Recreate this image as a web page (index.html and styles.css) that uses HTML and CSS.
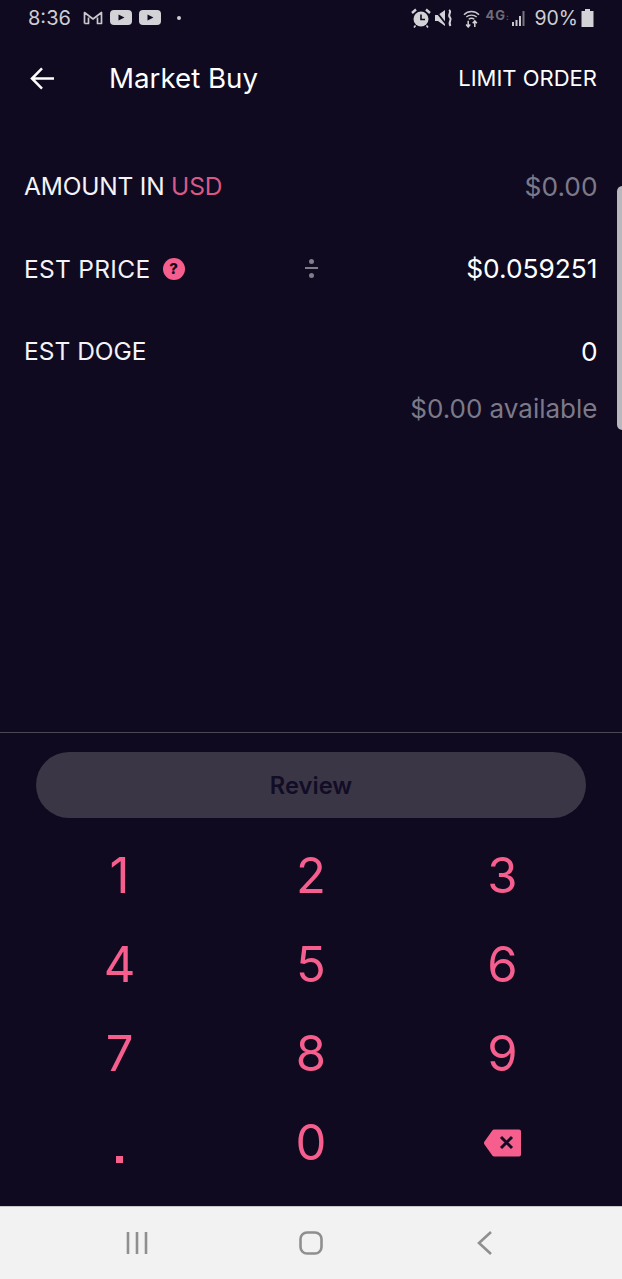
FILE: index.html
```html
<!DOCTYPE html>
<html lang="en">
    <head>
        <meta charset="UTF-8" />
        <meta name="viewport" content="width=device-width, initial-scale=1.0" />
        <title>Market Buy</title>
        <link rel="stylesheet" href="styles.css">
    </head>
    <body>
        <div class="pantalla">
            <!-- status bar -->
            <div class="estado">
                <div class="estado-izq">
                    <span class="hora">8:36</span>
                    <svg class="ic-gmail" viewBox="0 0 20 14"><path d="M1.500 12.500V1.500L10 8L18.500 1.500V12.500H14.500V6.500M1.500 12.500H5.500V6.500" fill="none" stroke="#c9c8cc" stroke-width="1.700" stroke-linejoin="round"/></svg>
                    <svg class="ic-video" viewBox="0 0 22 15"><rect width="22" height="15" rx="4" fill="#d3d2d6"/><path d="M8.500 4.500L14.500 7.500L8.500 10.500Z" fill="#0f0a1f"/></svg>
                    <svg class="ic-video" viewBox="0 0 22 15"><rect width="22" height="15" rx="4" fill="#d3d2d6"/><path d="M8.500 4.500L14.500 7.500L8.500 10.500Z" fill="#0f0a1f"/></svg>
                    <span class="punto"></span>
                </div>
                <div class="estado-der">
                    <svg class="ic-alarma" viewBox="0 0 20 20"><circle cx="10" cy="11" r="7.500" fill="#d3d2d6"/><path d="M10 6.500V11.500H14" fill="none" stroke="#0f0a1f" stroke-width="1.600"/><path d="M1 5L5 1.500M19 5L15 1.500" stroke="#d3d2d6" stroke-width="2.400"/><path d="M4.500 17.500L3 19.500M15.500 17.500L17 19.500" stroke="#d3d2d6" stroke-width="1.600"/></svg>
                    <svg class="ic-mudo" viewBox="0 0 18 18"><path d="M0 6H3L10 1V17L3 12H0Z" fill="#d3d2d6"/><path d="M0 1L11 15" stroke="#0f0a1f" stroke-width="1.800"/><path d="M14 1C17.500 3 12 5.500 15 8.500C17.500 11 12.500 13 15.500 17" fill="none" stroke="#d3d2d6" stroke-width="2"/></svg>
                    <svg class="ic-wifi" viewBox="0 0 18 20"><path d="M1 6.500C5.500 2 12.500 2 17 6.500M3.500 9C6.500 6.300 11.500 6.300 14.500 9M6 11.300C7.800 10 10.200 10 12 11.300" fill="none" stroke="#c9c8cc" stroke-width="1.500"/><path d="M5.500 13V19.500M3.300 17L5.500 19.500L7.700 17M12.500 19.500V13M10.300 15.500L12.500 13L14.700 15.500" fill="none" stroke="#d3d2d6" stroke-width="1.600"/></svg>
                    <span class="red">4G<span class="red-fin">:</span></span>
                    <svg class="ic-senal" viewBox="0 0 16 18"><path d="M1 13h2v4H1zM4.500 11h2v6h-2zM8 7h2v10H8z" fill="#c9c8cc"/><path d="M11.500 2h2v15h-2z" fill="#77757f"/></svg>
                    <span class="bateria-txt">90%</span>
                    <svg class="ic-bateria" viewBox="0 0 13 18"><path d="M4 0H9V2H12.500V18H.5V2H4Z" fill="#d3d2d6"/></svg>
                </div>
            </div>

            <!-- header -->
            <div class="cabecera">
                <svg class="ic-atras" viewBox="0 0 26 24"><path d="M25 12H2M12.500 1.500L2 12L12.500 22.500" fill="none" stroke="#fff" stroke-width="2.600"/></svg>
                <h1>Market Buy</h1>
                <a class="limite">LIMIT ORDER</a>
            </div>

            <!-- order form -->
            <div class="orden">
                <div class="fila">
                    <span class="etiqueta estrecha">AMOUNT IN <span class="rosa">USD</span></span>
                    <span class="valor apagado">$0.00</span>
                </div>
                <div class="fila">
                    <span class="etiqueta amplia">EST PRICE <span class="ayuda">?</span></span>
                    <span class="dividir"><i></i><b></b><i></i></span>
                    <span class="valor">$0.059251</span>
                </div>
                <div class="fila">
                    <span class="etiqueta">EST DOGE</span>
                    <span class="valor">0</span>
                </div>
                <p class="disponible">$0.00 available</p>
            </div>
            <div class="barra-scroll"></div>

            <!-- keypad -->
            <div class="inferior">
                <button class="revisar">Review</button>
                <div class="teclado">
                    <span class="tecla">1</span>
                    <span class="tecla">2</span>
                    <span class="tecla">3</span>
                    <span class="tecla">4</span>
                    <span class="tecla">5</span>
                    <span class="tecla">6</span>
                    <span class="tecla">7</span>
                    <span class="tecla">8</span>
                    <span class="tecla">9</span>
                    <span class="tecla"><span class="decimal"></span></span>
                    <span class="tecla">0</span>
                    <span class="tecla">
                        <svg class="ic-borrar" viewBox="0 0 37 28"><path d="M10 .5H35A2 2 0 0 1 37 2.500V25.500A2 2 0 0 1 35 27.500H10A2 2 0 0 1 8.500 26.800L.5 15.500A2.500 2.500 0 0 1 .5 12.500L8.500 1.200A2 2 0 0 1 10 .5Z" fill="#f65e8e"/><path d="M17 8L28 19M28 8L17 19" stroke="#0f0a1f" stroke-width="3"/></svg>
                    </span>
                </div>
            </div>

            <!-- android nav -->
            <div class="navegacion">
                <svg class="ic-nav" viewBox="0 0 24 24"><path d="M3 1V23M12 1V23M21 1V23" fill="none" stroke="#8f8f8f" stroke-width="2.600"/></svg>
                <svg class="ic-nav" viewBox="0 0 24 24"><rect x="1.500" y="1.500" width="21" height="21" rx="6.500" fill="none" stroke="#8f8f8f" stroke-width="2.600"/></svg>
                <svg class="ic-nav" viewBox="0 0 24 24"><path d="M18 1L6 12L18 23" fill="none" stroke="#8f8f8f" stroke-width="2.600"/></svg>
            </div>
        </div>
    </body>
</html>
```

FILE: styles.css
```css
* {
    box-sizing: border-box;
    margin: 0;
    padding: 0;
}

body {
    font-family: Inter, "Noto Sans", sans-serif;
    background: #0f0a1f;
    color: #f4f3f7;
}

.pantalla {
    position: relative;
    display: flex;
    flex-direction: column;
    width: 622px;
    height: 1279px;
    overflow: hidden;
}

/* status bar */
.estado {
    display: flex;
    justify-content: space-between;
    align-items: center;
    height: 35px;
    padding: 0 28px;
    color: #cfced3;
}

.estado-izq,
.estado-der {
    display: flex;
    align-items: center;
}

.hora {
    font-size: 20px;
    margin-right: 12px;
}

.ic-gmail {
    width: 20px;
    height: 14px;
    margin-right: 7px;
}

.ic-video {
    width: 22px;
    height: 15px;
    margin-right: 7px;
}

.punto {
    width: 4px;
    height: 4px;
    margin-left: 9px;
    border-radius: 50%;
    background: #cfced3;
}

.ic-alarma {
    width: 20px;
    height: 20px;
    margin-right: 4px;
}

.ic-mudo {
    width: 18px;
    height: 18px;
    margin-right: 10px;
}

.ic-wifi {
    width: 17px;
    height: 20px;
    margin-right: 5px;
}

.red {
    align-self: flex-start;
    width: 23px;
    margin: 1px 3px 0 0;
    font-size: 13px;
    font-weight: 700;
    letter-spacing: 1px;
    color: #6f6d78;
}

.red-fin {
    font-size: 8px;
}

.ic-senal {
    width: 16px;
    height: 18px;
    margin-right: 7px;
}

.bateria-txt {
    font-size: 19.500px;
    margin-right: 3px;
}

.ic-bateria {
    width: 13px;
    height: 18px;
}

/* header */
.cabecera {
    display: flex;
    align-items: center;
    height: 87px;
    padding: 0 25px 0 30px;
}

.ic-atras {
    width: 25px;
    height: 23px;
    margin-right: 54px;
}

.cabecera h1 {
    flex: 1;
    margin-top: -2px;
    font-size: 27.700px;
    font-weight: 400;
    color: #fff;
}

.limite {
    margin-top: -2px;
    font-size: 22px;
    font-weight: 400;
    color: #fff;
}

/* order form */
.orden {
    flex: 1;
    padding: 23px 24.500px 0 24px;
}

.fila {
    position: relative;
    display: flex;
    justify-content: space-between;
    align-items: center;
    height: 82.500px;
}

.etiqueta {
    display: flex;
    align-items: center;
    gap: 5px;
    font-size: 24.500px;
    white-space: pre;
}

.estrecha {
    letter-spacing: -0.2px;
}

.amplia {
    letter-spacing: 0.3px;
}

.rosa {
    margin-left: -5px;
    color: #dc5884;
}

.ayuda {
    display: flex;
    justify-content: center;
    align-items: center;
    width: 22px;
    height: 22px;
    font-size: 15px;
    font-weight: 800;
    color: #0f0a1f;
    background: #f65e8e;
    border-radius: 50%;
}

.valor {
    font-size: 26.300px;
    font-weight: 400;
    color: #fff;
}

.apagado {
    color: #7c7989;
}

.dividir {
    position: absolute;
    left: 281px;
    top: 31px;
    display: flex;
    flex-direction: column;
    align-items: center;
    gap: 3.500px;
    width: 13px;
}

.dividir i {
    width: 5px;
    height: 5px;
    border-radius: 50%;
    background: #7f7c8c;
}

.dividir b {
    width: 13px;
    height: 2px;
    background: #7f7c8c;
}

.disponible {
    font-size: 26px;
    text-align: right;
    color: #7c7989;
}

.barra-scroll {
    position: absolute;
    top: 186px;
    right: -6px;
    width: 11px;
    height: 244px;
    background: #b9b8bd;
    border-radius: 6px;
}

/* keypad */
.inferior {
    height: 474px;
    padding-top: 19px;
    border-top: 1px solid #4a4654;
}

.revisar {
    display: block;
    width: 550px;
    height: 66px;
    margin: 0 auto;
    font-family: inherit;
    font-size: 23.700px;
    font-weight: 600;
    color: #120d27;
    background: #3b3646;
    border: none;
    border-radius: 33px;
}

.teclado {
    display: grid;
    grid-template-columns: repeat(3, 191.500px);
    grid-auto-rows: 89px;
    justify-content: center;
    margin-top: 13px;
}

.tecla {
    display: flex;
    justify-content: center;
    align-items: center;
    font-size: 49px;
    font-weight: 400;
    color: #f65e8e;
}

.decimal {
    width: 7px;
    height: 7px;
    margin-top: 33px;
    background: #f65e8e;
}

.ic-borrar {
    width: 37px;
    height: 28px;
}

/* android nav */
.navegacion {
    display: flex;
    justify-content: center;
    gap: 150px;
    align-items: center;
    height: 73px;
    background: #f2f2f2;
    border-top: 1px solid #c9c9c9;
}

.ic-nav {
    width: 24px;
    height: 24px;
}
```
